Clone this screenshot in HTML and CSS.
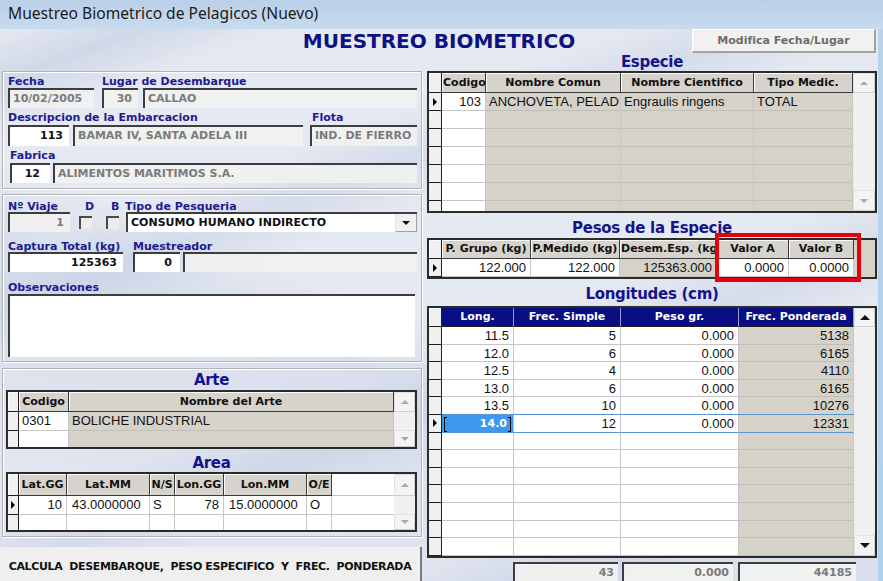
FILE: index.html
```html
<!DOCTYPE html>
<html lang="es">
<head>
<meta charset="utf-8">
<title>Muestreo Biometrico de Pelagicos (Nuevo)</title>
<link rel="stylesheet" href="styles.css">
</head>
<body>
<div class="win">
  <div class="titlebar">Muestreo Biometrico de Pelagicos (Nuevo)</div>
  <div class="form">
    <div class="toprow">
      <div></div>
      <div class="maintitle">MUESTREO BIOMETRICO</div>
      <button class="btn-mod">Modifica Fecha/Lugar</button>
    </div>
    <div class="cols">
      <div class="left">
        <div class="panel p1">
          <div class="lrow">
            <span class="lbl w94">Fecha</span><span class="lbl">Lugar de Desembarque</span>
          </div>
          <div class="frow">
            <div class="fld dis w86">10/02/2005</div>
            <div class="fld dis r w36 ml8">30</div>
            <div class="fld dis w274 ml5">CALLAO</div>
          </div>
          <div class="lrow mt4">
            <span class="lbl w304">Descripcion de la Embarcacion</span><span class="lbl">Flota</span>
          </div>
          <div class="frow h21 mt1">
            <div class="fld wht r w61">113</div>
            <div class="fld dis w230 ml4">BAMAR IV, SANTA ADELA III</div>
            <div class="fld dis w107 ml7">IND. DE FIERRO</div>
          </div>
          <div class="lrow mt4">
            <span class="lbl ml2">Fabrica</span>
          </div>
          <div class="frow mt1">
            <div class="fld wht r w40 ml2 pr10">12</div>
            <div class="fld dis w364 ml3">ALIMENTOS MARITIMOS S.A.</div>
          </div>
        </div>

        <div class="panel p2">
          <div class="lrow h11">
            <span class="lbl w77">Nº Viaje</span><span class="lbl w26">D</span><span class="lbl w14">B</span><span class="lbl">Tipo de Pesqueria</span>
          </div>
          <div class="frow">
            <div class="fld dis r w62">1</div>
            <div class="chk ml9"></div>
            <div class="chk ml14"></div>
            <div class="combo ml7">
              <span class="combo-text">CONSUMO HUMANO INDIRECTO</span>
              <span class="combo-btn"><span class="tri-dn"></span></span>
            </div>
          </div>
          <div class="lrow h11 mt9">
            <span class="lbl w125">Captura Total (kg)</span><span class="lbl">Muestreador</span>
          </div>
          <div class="frow">
            <div class="fld wht r w115">125363</div>
            <div class="fld wht r w47 ml10 pr8">0</div>
            <div class="fld dis w234 ml3"></div>
          </div>
          <div class="lrow mt10">
            <span class="lbl">Observaciones</span>
          </div>
          <div class="obs"></div>
        </div>

        <div class="panel p3">
          <div class="heading h17">Arte</div>
          <div class="grid g-art">
            <div class="gmain">
              <div class="gr gh"><div class="s"></div><div>Codigo</div><div>Nombre del Arte</div></div>
              <div class="gr"><div class="s"></div><div>0301</div><div class="gy">BOLICHE INDUSTRIAL</div></div>
              <div class="gr"><div class="s"></div><div></div><div class="gy"></div></div>
            </div>
            <div class="vs">
              <div class="sb sb-art-up"><span class="tri-up"></span></div>
              <div class="sb sb-art-dn"><span class="tri-dn"></span></div>
            </div>
          </div>
          <div class="heading h17 mt6">Area</div>
          <div class="grid g-are">
            <div class="gmain">
              <div class="gr gh"><div class="s"></div><div>Lat.GG</div><div>Lat.MM</div><div>N/S</div><div>Lon.GG</div><div>Lon.MM</div><div>O/E</div><div class="blank"></div></div>
              <div class="gr"><div class="s cur"></div><div class="r">10</div><div class="pl5">43.0000000</div><div>S</div><div class="r">78</div><div class="pl5">15.0000000</div><div>O</div><div class="blank"></div></div>
              <div class="gr"><div class="s"></div><div></div><div></div><div></div><div></div><div></div><div></div><div class="blank"></div></div>
            </div>
            <div class="vs">
              <div class="sb sb-are-up"><span class="tri-up"></span></div>
              <div class="sb sb-are-dn"><span class="tri-dn"></span></div>
            </div>
          </div>
        </div>

        <button class="calc">CALCULA  DESEMBARQUE,  PESO ESPECIFICO  Y  FREC.  PONDERADA</button>
      </div>

      <div class="right">
        <div class="heading h18">Especie</div>
        <div class="grid g-esp">
          <div class="gmain">
            <div class="gr gh"><div class="s"></div><div>Codigo</div><div>Nombre Comun</div><div>Nombre Cientifico</div><div>Tipo Medic.</div></div>
            <div class="gr"><div class="s cur"></div><div class="r">103</div><div class="gy">ANCHOVETA, PELAD</div><div class="gy">Engraulis ringens</div><div class="gy">TOTAL</div></div>
            <div class="gr"><div class="s"></div><div></div><div class="gy"></div><div class="gy"></div><div class="gy"></div></div>
            <div class="gr"><div class="s"></div><div></div><div class="gy"></div><div class="gy"></div><div class="gy"></div></div>
            <div class="gr"><div class="s"></div><div></div><div class="gy"></div><div class="gy"></div><div class="gy"></div></div>
            <div class="gr"><div class="s"></div><div></div><div class="gy"></div><div class="gy"></div><div class="gy"></div></div>
            <div class="gr"><div class="s"></div><div></div><div class="gy"></div><div class="gy"></div><div class="gy"></div></div>
            <div class="gr"><div class="s"></div><div></div><div class="gy"></div><div class="gy"></div><div class="gy"></div></div>
          </div>
          <div class="vs">
            <div class="sb sb-esp-up"><span class="tri-up"></span></div>
            <div class="sb sb-esp-dn"><span class="tri-dn"></span></div>
          </div>
        </div>

        <div class="pesos">
          <div class="heading h20 mt5">Pesos de la Especie</div>
          <div class="grid g-pes">
            <div class="gmain">
              <div class="gr gh"><div class="s"></div><div>P. Grupo (kg)</div><div>P.Medido (kg)</div><div>Desem.Esp. (kg)</div><div>Valor A</div><div>Valor B</div></div>
              <div class="gr"><div class="s cur"></div><div class="r">122.000</div><div class="r">122.000</div><div class="r gy">125363.000</div><div class="r">0.0000</div><div class="r">0.0000</div></div>
            </div>
          </div>
          <div class="redbox"></div>
        </div>

        <div class="heading h20 mt5">Longitudes (cm)</div>
        <div class="grid g-lon">
          <div class="gmain">
            <div class="gr gh navy"><div class="s"></div><div>Long.</div><div>Frec. Simple</div><div>Peso gr.</div><div>Frec. Ponderada</div></div>
            <div class="gr"><div class="s"></div><div class="r">11.5</div><div class="r">5</div><div class="r">0.000</div><div class="r gy">5138</div></div>
            <div class="gr"><div class="s"></div><div class="r">12.0</div><div class="r">6</div><div class="r">0.000</div><div class="r gy">6165</div></div>
            <div class="gr"><div class="s"></div><div class="r">12.5</div><div class="r">4</div><div class="r">0.000</div><div class="r gy">4110</div></div>
            <div class="gr"><div class="s"></div><div class="r">13.0</div><div class="r">6</div><div class="r">0.000</div><div class="r gy">6165</div></div>
            <div class="gr"><div class="s"></div><div class="r">13.5</div><div class="r">10</div><div class="r">0.000</div><div class="r gy">10276</div></div>
            <div class="gr selrow"><div class="s cur"></div><div class="r selcell">14.0</div><div class="r">12</div><div class="r">0.000</div><div class="r gy">12331</div></div>
            <div class="gr"><div class="s"></div><div></div><div></div><div></div><div class="gy"></div></div>
            <div class="gr"><div class="s"></div><div></div><div></div><div></div><div class="gy"></div></div>
            <div class="gr"><div class="s"></div><div></div><div></div><div></div><div class="gy"></div></div>
            <div class="gr"><div class="s"></div><div></div><div></div><div></div><div class="gy"></div></div>
            <div class="gr"><div class="s"></div><div></div><div></div><div></div><div class="gy"></div></div>
            <div class="gr"><div class="s"></div><div></div><div></div><div></div><div class="gy"></div></div>
            <div class="gr"><div class="s"></div><div></div><div></div><div></div><div class="gy"></div></div>
          </div>
          <div class="vs">
            <div class="sb sb-lon-up"><span class="tri-up dark"></span></div>
            <div class="sb sb-lon-dn"><span class="tri-dn dark"></span></div>
          </div>
        </div>

        <div class="totals">
          <div class="tot w105">43</div>
          <div class="tot w111">0.000</div>
          <div class="tot w118">44185</div>
        </div>
      </div>
    </div>
  </div>
</div>
</body>
</html>
```

FILE: styles.css
```css
* { box-sizing: border-box; margin: 0; padding: 0; }

html, body {
  width: 883px;
  height: 581px;
  overflow: hidden;
}

body {
  font-family: "DejaVu Sans", Verdana, sans-serif;
  font-size: 11px;
  color: #111;
  background: #c3d7ec;
}

.win {
  width: 883px;
  height: 581px;
  display: flex;
  flex-direction: column;
  background: linear-gradient(#bcd2ea, #aed1ef);
}

.titlebar {
  height: 29px;
  flex: none;
  padding-left: 8px;
  font-family: "Noto Sans", "Open Sans", sans-serif;
  font-size: 15.6px;
  line-height: 27px;
  color: #1b1b1b;
  background: linear-gradient(#bad0e8, #c8dbef);
}

.form {
  flex: 1;
  width: 878px;
  overflow: hidden;
  background:
    linear-gradient(160deg, rgba(255,255,255,0) 0%, rgba(160,176,210,.30) 6%, rgba(255,255,255,0) 12%,
      rgba(255,255,255,0) 26%, rgba(170,186,218,.28) 32%, rgba(255,255,255,0) 38%,
      rgba(255,255,255,0) 55%, rgba(165,180,214,.25) 62%, rgba(255,255,255,0) 68%,
      rgba(255,255,255,0) 80%, rgba(165,180,214,.25) 86%, rgba(255,255,255,0) 92%),
    linear-gradient(20deg, rgba(255,255,255,0) 0%, rgba(180,192,222,.25) 40%, rgba(255,255,255,0) 48%),
    #e5e9f1;
}

/* ---------- top row ---------- */
.toprow {
  display: grid;
  grid-template-columns: 1fr auto 1fr;
  height: 24px;
  align-items: center;
}

.maintitle {
  font-weight: bold;
  font-size: 20px;
  line-height: 24px;
  color: #0c1282;
  white-space: nowrap;
}

.btn-mod {
  justify-self: end;
  margin-right: 2px;
  width: 184px;
  height: 24px;
  font-family: "DejaVu Sans", sans-serif;
  font-weight: bold;
  font-size: 11px;
  color: #6c6c6c;
  background: #f1f1f1;
  border: 1px solid #fff;
  border-right: 2px solid #a3a3a3;
  border-bottom: 2px solid #a3a3a3;
}

/* ---------- columns ---------- */
.cols {
  display: flex;
  gap: 5px;
}

.left {
  width: 422px;
  flex: none;
  padding-top: 18px;
}

.right {
  width: 450px;
  flex: none;
}

/* ---------- panels ---------- */
.panel {
  margin-left: 2px;
  width: 420px;
  border: 1px solid #b3b3b3;
  box-shadow: inset 1px 1px 0 #fff, 1px 1px 0 #fff;
  padding-left: 5px;
}

.p1 { padding-top: 4px; padding-bottom: 5px; }
.p2 { margin-top: 5px; padding-top: 6px; padding-bottom: 4px; }
.p3 { margin-top: 6px; padding: 3px 0 4px 3px; }

.lrow {
  display: flex;
  height: 12px;
}
.lrow.h11 { height: 11px; }

.lbl {
  flex: none;
  font-weight: bold;
  font-size: 11px;
  line-height: 12px;
  color: #221a8e;
  white-space: nowrap;
}

.frow {
  display: flex;
  height: 20px;
}
.frow.h21 { height: 21px; }

.fld {
  flex: none;
  height: 100%;
  border-top: 2px solid #3d3d3d;
  border-left: 2px solid #3d3d3d;
  padding: 0 3px;
  font-weight: bold;
  font-size: 11px;
  line-height: 17px;
  white-space: nowrap;
  overflow: hidden;
}
.dis { background: rgba(241,241,241,.92); color: #7b7b7b; }
.wht { background: #fff; color: #111; }
.fld.r { text-align: right; padding-right: 6px; }
.fld.pr10 { padding-right: 10px; }
.fld.pr8 { padding-right: 8px; }

.chk {
  flex: none;
  width: 13px;
  height: 13px;
  align-self: center;
  border-top: 2px solid #4a4a4a;
  border-left: 2px solid #4a4a4a;
  background: #ececec;
}

.combo {
  flex: none;
  width: 291px;
  height: 20px;
  display: flex;
  background: #fff;
  border-top: 2px solid #3d3d3d;
  border-left: 2px solid #3d3d3d;
}
.combo-text {
  flex: 1;
  padding-left: 3px;
  font-weight: bold;
  line-height: 17px;
  color: #111;
  white-space: nowrap;
}
.combo-btn {
  width: 22px;
  height: 18px;
  display: flex;
  align-items: center;
  justify-content: center;
  background: #f0f0f0;
  border-left: 1px solid #e4e4e4;
  border-right: 1px solid #a0a0a0;
  border-bottom: 1px solid #a0a0a0;
}

.obs {
  width: 407px;
  height: 63px;
  background: #fff;
  border-top: 2px solid #3d3d3d;
  border-left: 2px solid #3d3d3d;
}

/* widths & spacing utilities */
.w14 { width: 14px; } .w26 { width: 26px; } .w36 { width: 36px; } .w40 { width: 40px; }
.w47 { width: 47px; } .w61 { width: 61px; } .w62 { width: 62px; } .w77 { width: 77px; }
.w86 { width: 86px; } .w94 { width: 94px; } .w107 { width: 107px; } .w115 { width: 115px; }
.w125 { width: 125px; } .w230 { width: 230px; } .w234 { width: 234px; } .w274 { width: 274px; }
.w304 { width: 304px; } .w364 { width: 364px; }
.w105 { width: 105px; } .w111 { width: 111px; } .w118 { width: 118px; }
.ml2 { margin-left: 2px; } .ml3 { margin-left: 3px; } .ml4 { margin-left: 4px; } .ml5 { margin-left: 5px; }
.ml7 { margin-left: 7px; } .ml8 { margin-left: 8px; } .ml9 { margin-left: 9px; } .ml10 { margin-left: 10px; }
.ml14 { margin-left: 14px; }
.mt1 { margin-top: 1px; } .mt4 { margin-top: 4px; } .mt5 { margin-top: 5px; } .mt6 { margin-top: 6px; }
.mt9 { margin-top: 9px; } .mt10 { margin-top: 10px; }

/* ---------- headings ---------- */
.heading {
  text-align: center;
  font-weight: bold;
  font-size: 15px;
  letter-spacing: -0.3px;
  color: #15138c;
  white-space: nowrap;
}
.h17 { height: 17px; line-height: 17px; }
.h18 { height: 18px; line-height: 18px; }
.h20 { height: 20px; line-height: 20px; }
.p3 .heading { width: 411px; }

/* ---------- grids ---------- */
.grid {
  display: flex;
  border: 2px solid #2b2b2b;
  background: #fff;
  overflow: hidden;
}
.gmain {
  flex: none;
  overflow: hidden;
}
.gr {
  display: grid;
  height: 18px;
}
.gr > div {
  background: #fff;
  border-right: 1px solid #c6c6c6;
  border-bottom: 1px solid #c6c6c6;
  padding: 0 3px;
  font-family: "Liberation Sans", Arial, sans-serif;
  font-size: 13px;
  line-height: 17px;
  white-space: nowrap;
  overflow: hidden;
  color: #111;
}
.gr > .r { text-align: right; padding-right: 4px; }
.gr > .pl5 { padding-left: 5px; }
.gr > .gy { background: #d5d2ca; border-right-color: #c9c6bf; border-bottom-color: #c2bfb8; }
.gr > .blank { border-right: none; }
.gr > .s {
  padding: 0;
  background: #f0f0f0;
  border-right: 1px solid #1e1e1e;
  border-bottom: 1px solid #1e1e1e;
  display: flex;
  align-items: center;
  justify-content: center;
}
.gr > .s.cur::before {
  content: "";
  width: 0;
  height: 0;
  border-left: 4px solid #000;
  border-top: 4px solid transparent;
  border-bottom: 4px solid transparent;
}

.gh > div {
  background: #d6d3cc;
  font-family: "DejaVu Sans", sans-serif;
  font-weight: bold;
  font-size: 11px;
  line-height: 19px;
  text-align: center;
  padding: 0 1px;
  border-right: 1px solid #3a3a3a;
  border-bottom: 1px solid #3a3a3a;
  box-shadow: inset 1px 1px 0 #fbfbfb;
}
.gh > .blank { background: #fff; box-shadow: none; border-bottom: 1px solid #c6c6c6; }

.gh.navy > div:not(.s) {
  background: #0a0e84;
  color: #fff;
  border-right: 1px solid #9a9ad0;
  border-bottom: 1px solid #1e1e1e;
  box-shadow: none;
}

.vs {
  flex: 1;
  background: #f0f0f0;
  display: flex;
  flex-direction: column;
  justify-content: space-between;
}
.sb {
  display: flex;
  align-items: center;
  justify-content: center;
  background: #f3f3f3;
  border: 1px solid #e2e2e2;
  border-right-color: #d0d0d0;
  border-bottom-color: #d0d0d0;
}
.tri-up, .tri-dn {
  width: 0;
  height: 0;
  border-left: 4px solid transparent;
  border-right: 4px solid transparent;
}
.tri-up { border-bottom: 4px solid #a9a9a9; }
.tri-dn { border-top: 4px solid #a9a9a9; }
.combo-btn .tri-dn, .tri-dn.dark { border-top-color: #111; }
.tri-up.dark { border-bottom-color: #111; }
.tri-up.dark, .tri-dn.dark { border-left-width: 5px; border-right-width: 5px; border-top-width: 5px; }
.tri-up.dark { border-top-width: 0; border-bottom-width: 5px; }

/* Especie */
.g-esp { height: 142px; }
.g-esp .gr { grid-template-columns: 13px 44px 135px 133px 99px; }
.g-esp .gh { height: 20px; }
.sb-esp-up { height: 20px; }
.sb-esp-dn { height: 21px; }

/* Pesos */
.pesos { position: relative; }
.g-pes { height: 41px; background: #d5d2ca; }
.g-pes .gmain { flex: 1; background: #d5d2ca; }
.g-pes .gr { grid-template-columns: 13px 89px 89px 97px 72px 65px; }
.g-pes .gh { height: 19px; }
.g-pes .gh > div { line-height: 18px; }
.redbox {
  position: absolute;
  left: 288px;
  top: 15px;
  width: 146px;
  height: 49px;
  border: 4px solid #e5000c;
}

/* Longitudes */
.g-lon { height: 252px; margin-top: 2px; }
.g-lon .gr { grid-template-columns: 13px 72px 107px 118px 115px; height: 17.6px; }
.g-lon .gh { height: 19px; }
.g-lon .gh > div { line-height: 18px; }
.sb-lon-up { height: 19px; }
.sb-lon-dn { height: 21px; }
.selrow > div:not(.s) {
  border-bottom-color: #5b95cf;
  box-shadow: 0 -1px 0 #5b95cf;
}
.gr > .selcell {
  position: relative;
  background: #3d98ee;
  font-family: "DejaVu Sans", sans-serif;
  font-weight: bold;
  font-size: 11px;
  color: #fff;
  padding-right: 6px;
}
.selcell::before, .selcell::after {
  content: "";
  position: absolute;
  top: 2px;
  width: 2px;
  height: 13px;
  border: 1px solid #000;
}
.selcell::before { left: 2px; border-right: none; }
.selcell::after { right: 2px; border-left: none; }

/* Arte / Area */
.g-art { width: 411px; height: 59px; margin-top: 1px; }
.g-art .gr { grid-template-columns: 11px 50px 325px; height: 19px; }
.g-art .gh { height: 20px; }
.sb-art-up { height: 20px; }
.sb-art-dn { height: 17px; }

.g-are { width: 411px; height: 60px; }
.g-are .gr { grid-template-columns: 11px 48px 83px 25px 49px 83px 25px 62px; height: 19px; }
.g-are .gh { height: 22px; }
.g-are .gh > div { line-height: 21px; }
.sb-are-up { height: 22px; }
.sb-are-dn { height: 16px; }

/* totals */
.totals {
  display: flex;
  margin-top: 4px;
  margin-left: 86px;
  gap: 4px;
}
.tot {
  height: 24px;
  background: rgba(241,241,241,.95);
  border-top: 2px solid #3d3d3d;
  border-left: 2px solid #3d3d3d;
  text-align: right;
  padding-right: 4px;
  font-weight: bold;
  font-size: 11px;
  line-height: 17px;
  color: #7b7b7b;
}
.tot.w118 { margin-left: 1px; }

/* bottom-left button */
.calc {
  display: block;
  width: 422px;
  height: 40px;
  margin-top: 10px;
  background: #efefef;
  border: none;
  border-right: 2px solid #7c7c7c;
  font-family: "DejaVu Sans", sans-serif;
  font-weight: bold;
  font-size: 11px;
  letter-spacing: -0.35px;
  color: #111;
  white-space: pre;
  text-align: center;
  padding-bottom: 2px;
}
```
